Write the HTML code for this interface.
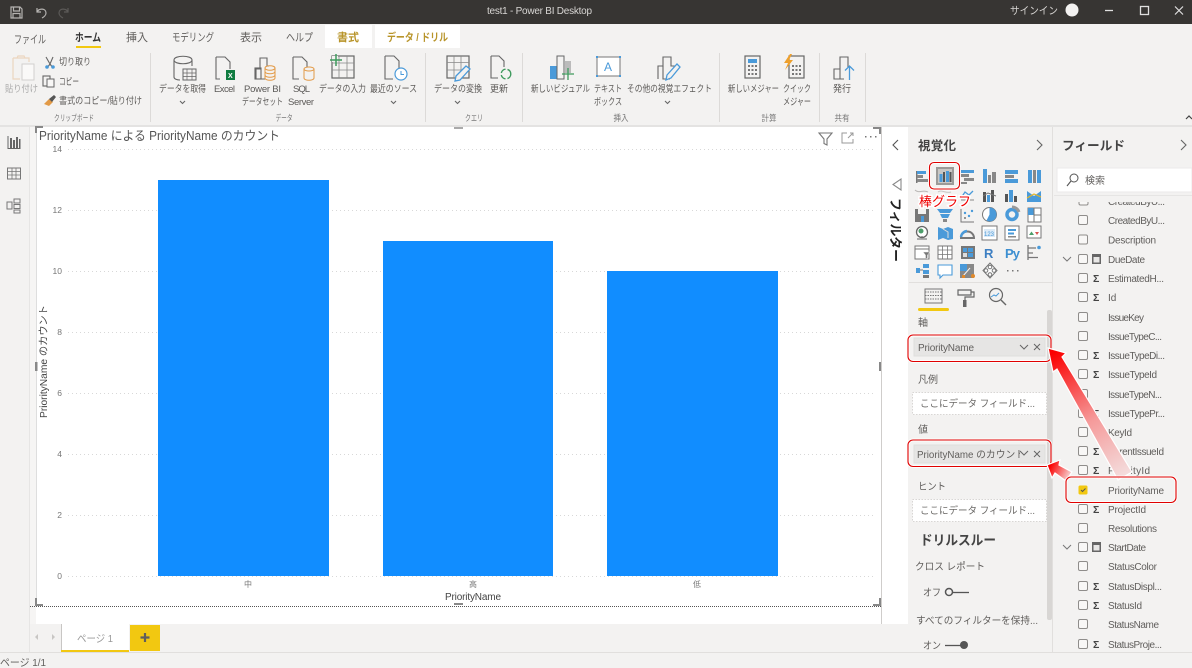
<!DOCTYPE html>
<html lang="ja"><head><meta charset="utf-8"><title>test1 - Power BI Desktop</title>
<style>
html,body{margin:0;padding:0;background:#f3f2f1;}
body{width:1192px;height:668px;overflow:hidden;position:relative;font-family:"Liberation Sans","Noto Sans CJK JP",sans-serif;}
svg{position:absolute;left:0;top:0;filter:blur(.35px);}
text{font-family:"Liberation Sans","Noto Sans CJK JP",sans-serif;fill:#605e5c;font-size:9px;}
.r{font-size:9.5px;fill:#5c5a58;}
.m{text-anchor:middle;}
.t{font-size:11px;fill:#605e5c;}
.g{font-size:8.5px;fill:#777;text-anchor:middle;}
.f{font-size:10px;fill:#605e5c;}
.tick{font-size:8.5px;fill:#777;text-anchor:end;}
.ic{fill:none;stroke:#666;stroke-width:1.1;}
.ib{fill:#4a9ad9;stroke:none;}
.ig{fill:#777;stroke:none;}
.sig{font-size:10.5px;font-weight:bold;fill:#444;}
.cb{fill:#f8f7f6;stroke:#8f8d8b;stroke-width:1;}
</style></head><body>
<svg width="1192" height="668" viewBox="0 0 1192 668" xmlns="http://www.w3.org/2000/svg">
<defs>
<linearGradient id="a1" gradientUnits="userSpaceOnUse" x1="1124" y1="475" x2="1055" y2="352"><stop offset="0" stop-color="#f4dcdc"/><stop offset=".45" stop-color="#f59a9a"/><stop offset="1" stop-color="#fb0000"/></linearGradient>
<linearGradient id="a2" gradientUnits="userSpaceOnUse" x1="1070" y1="476" x2="1050" y2="466"><stop offset="0" stop-color="#f6d2d2"/><stop offset="1" stop-color="#fb0000"/></linearGradient>
<clipPath id="fl"><rect x="1054" y="196" width="138" height="456"/></clipPath>
<clipPath id="v2"><rect x="910" y="445" width="110" height="18"/></clipPath>
</defs>

<!-- title bar -->
<rect x="0" y="0" width="1192" height="24" fill="#373533"/>
<g fill="none" stroke="#b5b3b1" stroke-width="1.2">
<path d="M11 7h9l2 2v9H11zM13.500 7v4h6V7M13 18v-4.500h7V18"/>
<path d="M37 8v4h4M37 12c2-4 9-4 9 1 0 2-2 4-4 5"/>
<path d="M68 8v4h-4M68 12c-2-4-9-4-9 1 0 2 2 4 4 5" stroke="#5c5a58"/>
</g>
<text x="487" y="14" style="font-size:10px;fill:#d8d6d4" textLength="105">test1 - Power BI Desktop</text>
<text x="1010" y="14" style="font-size:10.500px;fill:#d8d6d4" textLength="48" lengthAdjust="spacingAndGlyphs">サインイン</text>
<circle cx="1072" cy="10" r="6.500" fill="#f3f2f1"/>
<path d="M1105 10.500h8" stroke="#e0e0e0" stroke-width="1.300"/>
<rect x="1140.500" y="6.500" width="8" height="8" fill="none" stroke="#e0e0e0" stroke-width="1.300"/>
<path d="M1175 6.500l8 8M1183 6.500l-8 8" stroke="#e0e0e0" stroke-width="1.200"/>

<!-- ribbon -->
<rect x="0" y="24" width="1192" height="101" fill="#f3f2f1"/>
<rect x="0" y="125" width="1192" height="2" fill="#e4e3e2"/>
<rect x="325" y="25" width="47" height="23" fill="#fff"/>
<rect x="375" y="25" width="85" height="23" fill="#fff"/>
<text class="t" x="14" y="43" textLength="32" lengthAdjust="spacingAndGlyphs">ファイル</text>
<text class="t" x="75" y="41" textLength="26" lengthAdjust="spacingAndGlyphs" style="font-weight:bold;fill:#333">ホーム</text>
<rect x="76" y="46" width="25" height="2" fill="#f2c811"/>
<text class="t" x="126" y="41" textLength="22" lengthAdjust="spacingAndGlyphs">挿入</text>
<text class="t" x="172" y="41" textLength="42" lengthAdjust="spacingAndGlyphs">モデリング</text>
<text class="t" x="240" y="41" textLength="22" lengthAdjust="spacingAndGlyphs">表示</text>
<text class="t" x="286" y="41" textLength="27" lengthAdjust="spacingAndGlyphs">ヘルプ</text>
<text class="t" x="337" y="41" textLength="22" lengthAdjust="spacingAndGlyphs" style="font-weight:bold;fill:#b8942a">書式</text>
<text class="t" x="387" y="41" textLength="61" lengthAdjust="spacingAndGlyphs" style="font-weight:bold;fill:#b8942a">データ / ドリル</text>
<g stroke="#dcdad8"><path d="M150.500 53v69M425.500 53v69M522.500 53v69M719.500 53v69M819.500 53v69M865.500 53v69"/></g>

<!-- clipboard -->
<g fill="none" stroke="#ecd6bf" stroke-width="1.200"><path d="M13 58h16v4M13 58v21h7M17 58l1-2h6l1 2"/></g>
<rect x="22" y="64" width="12" height="16" fill="#faf9f8" stroke="#d2d0ce"/>
<text class="r" x="5" y="92" textLength="33" lengthAdjust="spacingAndGlyphs" style="fill:#aaa">貼り付け</text>
<path d="M46 57l4 7 3-7M50 64l-3 4M50 64l3 4" class="ic" stroke="#555"/>
<circle cx="47" cy="67" r="1.800" class="ib"/><circle cx="53" cy="67" r="1.800" class="ib"/>
<text class="r" x="59" y="65" textLength="32" lengthAdjust="spacingAndGlyphs">切り取り</text>
<rect x="43" y="76" width="7" height="10" class="ic"/><rect x="47" y="79" width="7" height="8" fill="#f8f7f6" stroke="#666"/>
<text class="r" x="59" y="85" textLength="20" lengthAdjust="spacingAndGlyphs">コピー</text>
<path d="M44 104l5-5 4 3-4 4z" fill="#e29a47"/><path d="M49 99l5-4 2 2-4 5z" fill="#555"/>
<text class="r" x="59" y="104" textLength="83" lengthAdjust="spacingAndGlyphs">書式のコピー/貼り付け</text>
<text class="g" x="74" y="121" textLength="40" lengthAdjust="spacingAndGlyphs">クリップボード</text>

<!-- data -->
<path d="M174 60c0-5 18-5 18 0v6M174 60c0 5 18 5 18 0M174 60v17c0 2 3 3 6 3" class="ic"/>
<rect x="183" y="69" width="13" height="11" fill="#f3f2f1" stroke="#666"/><path d="M183 73h13M183 76.500h13M187 69v11M192 69v11" stroke="#666" stroke-width=".7"/>
<path d="M216 57h9l5 5v7M216 57v22h4" class="ic"/>
<rect x="226" y="70" width="9" height="10" fill="#107c41"/><text x="228" y="78" style="font-size:7px;font-weight:bold;fill:#fff">X</text>
<path d="M256 79v-10h4v-11h7v8h2M256 79h9" class="ic"/><rect x="255" y="68" width="6" height="11" class="ic"/>
<ellipse cx="270" cy="68" rx="5" ry="2.300" fill="none" stroke="#e29a47"/><path d="M265 68v10c0 3 10 3 10 0V68M265 71.500c0 3 10 3 10 0M265 75c0 3 10 3 10 0" fill="none" stroke="#e29a47"/>
<path d="M293 57h9l5 5v5M293 57v22h6" class="ic"/>
<ellipse cx="309" cy="69" rx="5" ry="2" fill="none" stroke="#e29a47"/><path d="M304 69v9c0 3 10 3 10 0v-9" fill="none" stroke="#e29a47"/>
<rect x="332" y="56" width="22" height="22" fill="none" stroke="#666" stroke-width="1.200"/><path d="M332 63h22M332 70h22M339 56v22M347 56v22" stroke="#888" stroke-width=".8"/>
<rect x="332" y="56" width="6" height="6" fill="#f3f2f1"/><path d="M336 54v12M330 60h12" stroke="#3e9a5d" stroke-width="1.500"/>
<path d="M385 56h9l5 5v8M385 56v23h8" class="ic"/><circle cx="401" cy="74" r="6" fill="#fff" stroke="#4a9ad9" stroke-width="1.200"/><path d="M401 71v3.500h3" stroke="#4a9ad9" fill="none"/>
<text class="r" x="159" y="92" textLength="47" lengthAdjust="spacingAndGlyphs">データを取得</text>
<path d="M180 101l2.500 2.500 2.500-2.500" class="ic" stroke="#555"/>
<text class="r" x="214" y="92" textLength="21">Excel</text>
<text class="r" x="244" y="92" textLength="37">Power BI</text>
<text class="r" x="242" y="105" textLength="41" lengthAdjust="spacingAndGlyphs">データセット</text>
<text class="r" x="293" y="92" textLength="17">SQL</text>
<text class="r" x="288" y="105" textLength="26">Server</text>
<text class="r" x="319" y="92" textLength="47" lengthAdjust="spacingAndGlyphs">データの入力</text>
<text class="r" x="370" y="92" textLength="47" lengthAdjust="spacingAndGlyphs">最近のソース</text>
<path d="M391 101l2.500 2.500 2.500-2.500" class="ic" stroke="#555"/>
<text class="g" x="284" y="121" textLength="17" lengthAdjust="spacingAndGlyphs">データ</text>

<!-- query -->
<rect x="447" y="56" width="22" height="22" fill="none" stroke="#666" stroke-width="1.200"/><path d="M447 62.500h22M447 70h22M454 56v22M461 56v22" stroke="#888" stroke-width=".8"/>
<path d="M466 66l4 3-10 11-5 1 1-5z" fill="#f3f2f1" stroke="#4a9ad9" stroke-width="1.300"/>
<path d="M491 56h8l5 5v6M491 56v22h7" class="ic"/>
<circle cx="506" cy="74" r="4.800" fill="none" stroke="#3e9a5d" stroke-width="1.400" stroke-dasharray="6 2"/>
<text class="r" x="434" y="92" textLength="48" lengthAdjust="spacingAndGlyphs">データの変換</text>
<path d="M455 101l2.500 2.500 2.500-2.500" class="ic" stroke="#555"/>
<text class="r" x="490" y="92" textLength="18" lengthAdjust="spacingAndGlyphs">更新</text>
<text class="g" x="474" y="121" textLength="18" lengthAdjust="spacingAndGlyphs">クエリ</text>

<!-- insert -->
<rect x="550" y="66" width="7" height="13" class="ib"/><rect x="557" y="56" width="7" height="23" fill="#f3f2f1" stroke="#666"/><rect x="565" y="61" width="6" height="12" fill="#bbb"/>
<path d="M568 68v12M562 74h12" stroke="#3e9a5d" stroke-width="1.300"/>
<rect x="597" y="57" width="23" height="19" fill="#fff" stroke="#777"/>
<rect x="596" y="56" width="2" height="2" class="ib"/><rect x="619" y="56" width="2" height="2" class="ib"/><rect x="596" y="75" width="2" height="2" class="ib"/><rect x="619" y="75" width="2" height="2" class="ib"/>
<text x="604" y="71" style="font-size:12px;fill:#4a9ad9">A</text>
<path d="M658 79V66h5v-9h8v9h4" class="ic"/><path d="M663 66v13h7" class="ic"/><path d="M677 64l3 3-9 11-5 2 1-5z" fill="#f3f2f1" stroke="#4a9ad9" stroke-width="1.300"/>
<text class="r" x="531" y="92" textLength="59" lengthAdjust="spacingAndGlyphs">新しいビジュアル</text>
<text class="r" x="594" y="92" textLength="28" lengthAdjust="spacingAndGlyphs">テキスト</text>
<text class="r" x="594" y="105" textLength="28" lengthAdjust="spacingAndGlyphs">ボックス</text>
<text class="r" x="627" y="92" textLength="85" lengthAdjust="spacingAndGlyphs">その他の視覚エフェクト</text>
<path d="M665 101l2.500 2.500 2.500-2.500" class="ic" stroke="#555"/>
<text class="g" x="621" y="121" textLength="15" lengthAdjust="spacingAndGlyphs">挿入</text>

<!-- calc -->
<rect x="745" y="56" width="15" height="22" fill="none" stroke="#666" stroke-width="1.200"/><rect x="748" y="59" width="9" height="4" class="ib"/>
<g class="ig"><rect x="748" y="65" width="2" height="2"/><rect x="751.500" y="65" width="2" height="2"/><rect x="755" y="65" width="2" height="2"/><rect x="748" y="69" width="2" height="2"/><rect x="751.500" y="69" width="2" height="2"/><rect x="755" y="69" width="2" height="2"/><rect x="748" y="73" width="2" height="2"/><rect x="751.500" y="73" width="2" height="2"/><rect x="755" y="73" width="2" height="2"/></g>
<rect x="789" y="56" width="15" height="22" fill="none" stroke="#666" stroke-width="1.200"/>
<g class="ig"><rect x="792" y="65" width="2" height="2"/><rect x="795.500" y="65" width="2" height="2"/><rect x="799" y="65" width="2" height="2"/><rect x="792" y="69" width="2" height="2"/><rect x="795.500" y="69" width="2" height="2"/><rect x="799" y="69" width="2" height="2"/><rect x="792" y="73" width="2" height="2"/><rect x="795.500" y="73" width="2" height="2"/><rect x="799" y="73" width="2" height="2"/></g>
<path d="M790 54l-6 9h4l-3 7 8-10h-4l3-6z" fill="#eea02c"/>
<text class="r" x="728" y="92" textLength="51" lengthAdjust="spacingAndGlyphs">新しいメジャー</text>
<text class="r" x="783" y="92" textLength="28" lengthAdjust="spacingAndGlyphs">クイック</text>
<text class="r" x="783" y="105" textLength="28" lengthAdjust="spacingAndGlyphs">メジャー</text>
<text class="g" x="769" y="121" textLength="15" lengthAdjust="spacingAndGlyphs">計算</text>

<!-- publish -->
<path d="M834 79v-10h6v10zM840 69v-12h8v10M834 79h10" class="ic"/>
<path d="M849.500 80V66M845 70.500l4.500-4.500 4.500 4.500" fill="none" stroke="#4a9ad9" stroke-width="1.300"/>
<text class="r" x="833" y="92" textLength="18" lengthAdjust="spacingAndGlyphs">発行</text>
<text class="g" x="842" y="121" textLength="15" lengthAdjust="spacingAndGlyphs">共有</text>
<path d="M1186 119l3-3 3 3" fill="none" stroke="#444" stroke-width="1.200"/>

<!-- left nav -->
<rect x="0" y="127" width="30" height="525" fill="#f3f2f1"/>
<path d="M29.500 127v525" stroke="#e6e5e4"/>
<path d="M8 136v12.500h12.500" fill="none" stroke="#666"/><rect x="10" y="138" width="2" height="10" fill="#666"/><rect x="13" y="140" width="2" height="8" fill="#666"/><rect x="16" y="137" width="2" height="11" fill="#666"/><rect x="19" y="139" width="1.500" height="9" fill="#666"/>
<rect x="7.500" y="168" width="13" height="11" fill="none" stroke="#777"/><path d="M7.500 171.500h13M7.500 175h13M12 168v11M16 168v11" stroke="#777" stroke-width=".8"/>
<g fill="none" stroke="#777"><rect x="7" y="202" width="5" height="7"/><rect x="14" y="199" width="6" height="4"/><rect x="14" y="204.500" width="6" height="4"/><rect x="14" y="210" width="6" height="3"/></g>

<!-- canvas -->
<rect x="30" y="127" width="852" height="497" fill="#fff"/>
<rect x="30" y="127" width="6" height="497" fill="#f6f5f4"/>
<path d="M36.500 127v479" stroke="#dedede"/>
<g stroke="#d8d8d8" stroke-dasharray="1 3"><path d="M68 149.500h808M68 210.500h808M68 271.500h808M68 332.500h808M68 393.500h808M68 454.500h808M68 515.500h808M68 576.500h808"/></g>
<rect x="158" y="180" width="171" height="396" fill="#118dff"/>
<rect x="383" y="241" width="170" height="335" fill="#118dff"/>
<rect x="607" y="271" width="171" height="305" fill="#118dff"/>
<text x="39" y="140" style="font-size:12.500px;fill:#555" textLength="241" lengthAdjust="spacingAndGlyphs">PriorityName による PriorityName のカウント</text>
<text class="tick" x="62" y="152">14</text><text class="tick" x="62" y="213">12</text><text class="tick" x="62" y="274">10</text><text class="tick" x="62" y="335">8</text><text class="tick" x="62" y="396">6</text><text class="tick" x="62" y="457">4</text><text class="tick" x="62" y="518">2</text><text class="tick" x="62" y="579">0</text>
<text transform="translate(47,418) rotate(-90)" style="font-size:10px;fill:#444" textLength="113" lengthAdjust="spacingAndGlyphs">PriorityName のカウント</text>
<text x="445" y="600" style="font-size:10px;fill:#444" textLength="56">PriorityName</text>
<text class="g" x="248" y="587" style="font-size:8px">中</text>
<text class="g" x="473" y="587" style="font-size:8px">高</text>
<text class="g" x="697" y="587" style="font-size:8px">低</text>
<path d="M819 133h13l-5 6v6l-3-1.500V139z" fill="none" stroke="#777" stroke-width="1.100"/>
<path d="M847 133h-5v10h11v-4M848 138l5-5M850 133h3v3" fill="none" stroke="#999"/>
<g fill="#777"><rect x="865" y="136" width="1.500" height="1.500"/><rect x="870" y="136" width="1.500" height="1.500"/><rect x="875" y="136" width="1.500" height="1.500"/></g>
<!-- frame handles -->
<path d="M36 133v-6h7" fill="none" stroke="#888" stroke-width="2"/>
<path d="M873 128h7v6" fill="none" stroke="#888" stroke-width="2"/>
<path d="M36 598v7h7" fill="none" stroke="#888" stroke-width="2"/>
<path d="M873 605h7v-7" fill="none" stroke="#888" stroke-width="2"/>
<rect x="35" y="362" width="2.500" height="9" fill="#888"/><rect x="879" y="362" width="2.500" height="9" fill="#888"/>
<rect x="454" y="127" width="9" height="2" fill="#aaa"/><rect x="454" y="603" width="9" height="2" fill="#888"/>
<path d="M30 606.500h851" stroke="#555" stroke-dasharray="1 1"/>
<path d="M881.500 127v497" stroke="#cfcdcb"/>

<!-- filter pane -->
<rect x="882" y="127" width="26" height="497" fill="#fff"/>
<path d="M898 140l-5 5 5 5" fill="none" stroke="#555" stroke-width="1.100"/>
<path d="M901 179v11l-8-5.500z" fill="none" stroke="#888" stroke-width="1.100"/>
<text transform="translate(891,198) rotate(90)" style="font-size:13px;font-weight:bold;fill:#222" textLength="64" lengthAdjust="spacingAndGlyphs">フィルター</text>

<!-- viz pane -->
<rect x="908" y="127" width="145" height="525" fill="#f3f2f1"/>
<path d="M1052.500 127v525" stroke="#e1dfdd"/>
<text x="918" y="150" style="font-size:12.500px;font-weight:bold;fill:#444" textLength="38">視覚化</text>
<path d="M1037 140l5 5-5 5" fill="none" stroke="#666" stroke-width="1.100"/>
<path d="M909 282.500h143" stroke="#e1dfdd"/>

<!-- viz icon grid -->
<rect x="916" y="171" width="1.500" height="12" fill="#777"/>
<rect x="917" y="171" width="9" height="3" class="ib"/><rect x="917" y="175" width="6" height="3" fill="#888"/><rect x="917" y="179" width="12" height="3" fill="#888"/>
<rect x="936" y="167" width="18" height="18" fill="#9c9a98"/><rect x="938" y="169" width="14" height="14" fill="#c9c7c5"/><rect x="939.500" y="174" width="3" height="8" class="ib"/><rect x="943" y="172" width="2" height="10" fill="#555"/><rect x="946" y="171" width="3" height="11" class="ib"/><rect x="949.500" y="172" width="2" height="10" fill="#555"/>
<rect x="961" y="170" width="13" height="3" class="ib"/><rect x="961" y="174" width="8" height="3" fill="#888"/><rect x="964" y="178" width="10" height="3" fill="#888"/><rect x="961" y="182" width="6" height="2" fill="#888"/>
<rect x="983" y="169" width="4" height="14" class="ib"/><rect x="988" y="175" width="3" height="8" fill="#888"/><rect x="992" y="172" width="4" height="11" fill="#888"/>
<rect x="1005" y="170" width="13" height="4" class="ib"/><rect x="1005" y="175" width="9" height="3" fill="#888"/><rect x="1005" y="179" width="13" height="4" class="ib"/>
<rect x="1028" y="170" width="4" height="13" class="ib"/><rect x="1033" y="170" width="3" height="13" fill="#888"/><rect x="1037" y="170" width="4" height="13" class="ib"/>
<!-- row 2 -->
<path d="M915 190c4 4 8-1 13 2" fill="none" stroke="#b9b7b5"/><path d="M938 192c4-3 8 2 13 0" fill="none" stroke="#c9c7c5"/>
<path d="M961 198l4-6 4 3 4-4" fill="none" stroke="#4a9ad9" stroke-width="1.300"/><path d="M961 200h13" stroke="#888"/>
<rect x="983" y="192" width="3" height="10" fill="#555"/><rect x="987" y="195" width="3" height="7" class="ib"/><rect x="991" y="190" width="3" height="12" fill="#555"/><path d="M983 196l5-3 8 3" fill="none" stroke="#777"/>
<rect x="1005" y="194" width="3" height="8" fill="#555"/><rect x="1009" y="190" width="4" height="12" class="ib"/><rect x="1014" y="196" width="3" height="6" fill="#555"/>
<path d="M1027 191l7 5 7-5v11h-14z" class="ib"/><path d="M1027 198l7-4 7 3" fill="none" stroke="#e6b422" stroke-width="1.200"/>
<!-- row 3 -->
<rect x="915" y="209" width="14" height="13" fill="#777"/><rect x="918" y="209" width="8" height="5" fill="#f3f2f1"/><rect x="921" y="216" width="3" height="6" class="ib"/>
<path d="M937 209h16l-3 4h-10z" class="ib"/><path d="M940 214h10l-2 4h-6z" class="ib"/><rect x="943" y="219" width="4" height="3" fill="#888"/>
<path d="M961 209v13h13" fill="none" stroke="#777"/><g class="ib"><circle cx="965" cy="213" r="1.200"/><circle cx="969" cy="216" r="1.200"/><circle cx="972" cy="211" r="1.200"/></g><circle cx="965" cy="218" r="1" fill="#777"/>
<circle cx="989.500" cy="214.500" r="7" fill="#fff" stroke="#777"/><path d="M989.500 214.500V207.500a7 7 0 0 1 0 14 7 7 0 0 1-3-1z" class="ib"/>
<circle cx="1012" cy="214.500" r="5" fill="none" stroke="#4a9ad9" stroke-width="3.500"/><path d="M1012 207a7.500 7.500 0 0 1 7 5" fill="none" stroke="#999" stroke-width="3"/>
<rect x="1028" y="208" width="13" height="14" fill="#fff" stroke="#777"/><rect x="1028" y="208" width="6" height="7" class="ib"/><path d="M1034 208v14M1034 215h7" stroke="#777"/>
<!-- row 4 -->
<circle cx="922" cy="232" r="5.500" fill="#fff" stroke="#666" stroke-width="1.300"/><circle cx="921" cy="231" r="2.500" fill="#4c9e6a"/><path d="M917 239h10M922 238v-2" stroke="#666"/>
<path d="M938 227l5 2 5-2 5 2v10l-5 1-5-2-5 2z" class="ib"/><path d="M943 229l5 3v6" stroke="#ddd" fill="none"/>
<path d="M961 238a6.500 6.500 0 0 1 13 0z" fill="none" stroke="#777" stroke-width="2"/><path d="M961 237a6.500 6.500 0 0 1 6-6" fill="none" stroke="#4a9ad9" stroke-width="2.400"/>
<rect x="982" y="226" width="15" height="14" fill="#fff" stroke="#777"/><rect x="984" y="229" width="11" height="8" fill="#dceaf6"/><text x="984" y="236" style="font-size:6px;fill:#4a9ad9">123</text>
<rect x="1005" y="226" width="14" height="14" fill="#fff" stroke="#777"/><rect x="1008" y="229" width="8" height="2" class="ib"/><rect x="1008" y="232.500" width="6" height="2" class="ib"/><rect x="1008" y="236" width="8" height="1.500" fill="#888"/>
<rect x="1027" y="226" width="14" height="12" fill="#fff" stroke="#777"/><path d="M1029 235l2.500-3.500 2.500 3.500z" fill="#4c9e6a"/><path d="M1035 232h4l-2 3z" fill="#d9534f"/>
<!-- row 5 -->
<rect x="915" y="246" width="14" height="13" fill="#fff" stroke="#777"/><path d="M915 249h14" stroke="#777"/><path d="M923 252h7l-2.500 3v4l-2-1v-3z" fill="#777" stroke="#f3f2f1" stroke-width=".5"/>
<rect x="938" y="246" width="14" height="13" fill="#fff" stroke="#777"/><path d="M938 250h14M938 254.500h14M942.500 246v13M947.500 246v13" stroke="#777" stroke-width=".8"/>
<rect x="961" y="246" width="14" height="13" fill="#777"/><rect x="963" y="248" width="4" height="4" class="ib"/><rect x="968" y="248" width="5" height="4" class="ib"/><rect x="968" y="253" width="5" height="4" class="ib"/><rect x="963" y="253" width="4" height="4" fill="#ddd"/>
<text x="984" y="258" style="font-size:13px;font-weight:bold;fill:#3d7fc2">R</text>
<text x="1005" y="258" style="font-size:13px;font-weight:bold;fill:#3d8fd1" textLength="15">Py</text>
<path d="M1028 245v15M1028 248h8M1028 253h5M1028 257.500h10" fill="none" stroke="#777" stroke-width="1.300"/><circle cx="1039" cy="247.500" r="1.800" class="ib"/>
<!-- row 6 -->
<rect x="916" y="268" width="4" height="5" class="ib"/><rect x="923" y="264" width="6" height="4" class="ib"/><rect x="923" y="270" width="6" height="4" class="ib"/><rect x="923" y="275" width="6" height="3" fill="#777"/><path d="M920 270h3" stroke="#777"/>
<path d="M938 265h14v10h-9l-3 3v-3h-2z" fill="#fff" stroke="#4a9ad9" stroke-width="1.100"/>
<rect x="960" y="264" width="14" height="14" fill="#888"/><rect x="960" y="264" width="7" height="7" class="ib"/><path d="M963 276l7-8" stroke="#f3f2f1"/><circle cx="973" cy="276" r="2" fill="#e0892b"/><rect x="962" y="275" width="3" height="3" fill="#e0892b"/>
<path d="M990 263l7 7.500-7 7.500-7-7.500z" fill="#fff" stroke="#777"/><circle cx="990" cy="267" r="1.800" fill="none" stroke="#777"/><circle cx="986" cy="270.500" r="1.800" fill="none" stroke="#777"/><circle cx="994" cy="270.500" r="1.800" fill="none" stroke="#777"/><circle cx="990" cy="274.500" r="1.800" fill="none" stroke="#777"/>
<g fill="#777"><rect x="1007" y="270" width="1.500" height="1.500"/><rect x="1012" y="270" width="1.500" height="1.500"/><rect x="1017" y="270" width="1.500" height="1.500"/></g>

<!-- highlight -->
<rect x="929.500" y="162.500" width="30" height="26.500" rx="4.500" fill="none" stroke="#fff" stroke-width="3"/>
<rect x="929.500" y="162.500" width="30" height="26.500" rx="4.500" fill="none" stroke="#e00000" stroke-width="1.100"/>
<text x="919" y="206" style="font-size:13px;fill:#f00000;stroke:#fff;stroke-width:3px;paint-order:stroke" textLength="52">棒グラフ</text>

<!-- viz sub tabs -->
<g fill="none" stroke="#777"><rect x="925" y="289" width="17" height="14"/><path d="M925 292h17M925 295.500h17M925 299h17" stroke-dasharray="1.500 1"/></g>
<rect x="918" y="308" width="31" height="3" rx="1.500" fill="#f2c811"/>
<path d="M958 290h13v5h-13zM971 292h3v5h-9v4" fill="none" stroke="#666" stroke-width="1.200"/><rect x="963" y="300" width="3.500" height="7" fill="#666"/>
<circle cx="996" cy="295" r="6.500" fill="none" stroke="#666" stroke-width="1.200"/><path d="M991 297l3-2 2 1 3-3" fill="none" stroke="#4a9ad9"/><path d="M1001 300l5 5" stroke="#666" stroke-width="1.400"/>

<rect x="1047" y="310" width="5" height="310" rx="2" fill="#d8d6d4"/>

<!-- wells -->
<text class="f" x="918" y="326">軸</text>
<rect x="914" y="338" width="131" height="18" fill="#e6e5e4" stroke="#dfdedd"/>
<text class="f" x="918" y="351" textLength="56">PriorityName</text>
<path d="M1020 345l4 4 4-4M1034 344l6 6M1040 344l-6 6" fill="none" stroke="#666"/>
<text class="f" x="918" y="383" textLength="20">凡例</text>
<rect x="912.500" y="392.500" width="134" height="22" fill="#fff" stroke="#d8d6d4" stroke-dasharray="1.500 1.500"/>
<text class="f" x="920" y="407" textLength="115" lengthAdjust="spacingAndGlyphs" style="fill:#6a6866">ここにデータ フィールド...</text>
<text class="f" x="918" y="433">値</text>
<rect x="914" y="445" width="131" height="18" fill="#e6e5e4" stroke="#dfdedd"/>
<g clip-path="url(#v2)"><text class="f" x="917" y="458" textLength="108" lengthAdjust="spacingAndGlyphs">PriorityName のカウント</text></g>
<path d="M1020 451l4 4 4-4M1034 451l6 6M1040 451l-6 6" fill="none" stroke="#666"/>
<text class="f" x="918" y="490" textLength="28" lengthAdjust="spacingAndGlyphs">ヒント</text>
<rect x="912.500" y="499.500" width="134" height="22" fill="#fff" stroke="#d8d6d4" stroke-dasharray="1.500 1.500"/>
<text class="f" x="920" y="514" textLength="115" lengthAdjust="spacingAndGlyphs" style="fill:#6a6866">ここにデータ フィールド...</text>
<text x="920" y="545" style="font-size:13.500px;font-weight:bold;fill:#444" textLength="76" lengthAdjust="spacingAndGlyphs">ドリルスルー</text>
<text class="f" x="915" y="570" textLength="70" lengthAdjust="spacingAndGlyphs">クロス レポート</text>
<text class="f" x="923" y="596" textLength="18" lengthAdjust="spacingAndGlyphs">オフ</text>
<circle cx="949" cy="592" r="3.500" fill="none" stroke="#555" stroke-width="1.500"/><path d="M953 592.500h16" stroke="#555" stroke-width="1.300"/>
<text class="f" x="916" y="624" textLength="122" lengthAdjust="spacingAndGlyphs">すべてのフィルターを保持...</text>
<text class="f" x="923" y="649" textLength="18" lengthAdjust="spacingAndGlyphs">オン</text>
<path d="M945 645.500h16" stroke="#555" stroke-width="1.300"/><circle cx="964" cy="645" r="4" fill="#555"/>

<!-- fields pane -->
<rect x="1053" y="127" width="139" height="525" fill="#f3f2f1"/>
<text x="1062" y="150" style="font-size:12.500px;font-weight:bold;fill:#444" textLength="63" lengthAdjust="spacingAndGlyphs">フィールド</text>
<path d="M1181 140l5 5-5 5" fill="none" stroke="#666" stroke-width="1.100"/>
<rect x="1057" y="168" width="135" height="24" fill="#fff" stroke="#ebeaea"/>
<circle cx="1074" cy="178" r="4" fill="none" stroke="#555"/><path d="M1071 181l-4 5" stroke="#555" stroke-width="1.100"/>
<text class="f" x="1085" y="184" textLength="20">検索</text>
<path d="M1054 195.500h138" stroke="#e6e5e4"/>
<g clip-path="url(#fl)">
<rect class="cb" x="1079" y="196" width="9" height="9" rx="1.500"/><text class="f" x="1108" y="205" textLength="57">CreatedByU...</text>
</g>
<rect x="1054" y="196" width="138" height="6" fill="#f3f2f1"/>
<rect class="cb" x="1078.500" y="215.500" width="9" height="9" rx="1.500"/><text class="f" x="1108" y="224" textLength="57">CreatedByU...</text>
<rect class="cb" x="1078.500" y="235" width="9" height="9" rx="1.500"/><text class="f" x="1108" y="243.500" textLength="48">Description</text>
<path d="M1063 257l4 4 4-4" fill="none" stroke="#777"/><rect class="cb" x="1078.500" y="254.500" width="9" height="9" rx="1.500"/><rect x="1092" y="254" width="9" height="10" fill="#666"/><rect x="1093.500" y="257" width="6" height="5.500" fill="#e8e7e6"/><text class="f" x="1108" y="263" textLength="37">DueDate</text>
<rect class="cb" x="1078.500" y="273.500" width="9" height="9" rx="1.500"/><text class="sig" x="1093" y="282">Σ</text><text class="f" x="1108" y="282" textLength="56">EstimatedH...</text>
<rect class="cb" x="1078.500" y="292.500" width="9" height="9" rx="1.500"/><text class="sig" x="1093" y="301">Σ</text><text class="f" x="1108" y="301">Id</text>
<rect class="cb" x="1078.500" y="312.500" width="9" height="9" rx="1.500"/><text class="f" x="1108" y="321" textLength="36">IssueKey</text>
<rect class="cb" x="1078.500" y="331.500" width="9" height="9" rx="1.500"/><text class="f" x="1108" y="340" textLength="54">IssueTypeC...</text>
<rect class="cb" x="1078.500" y="350.500" width="9" height="9" rx="1.500"/><text class="sig" x="1093" y="359">Σ</text><text class="f" x="1108" y="359" textLength="57">IssueTypeDi...</text>
<rect class="cb" x="1078.500" y="369.500" width="9" height="9" rx="1.500"/><text class="sig" x="1093" y="378">Σ</text><text class="f" x="1108" y="378" textLength="49">IssueTypeId</text>
<rect class="cb" x="1078.500" y="389.500" width="9" height="9" rx="1.500"/><text class="f" x="1108" y="398" textLength="54">IssueTypeN...</text>
<rect class="cb" x="1078.500" y="408.500" width="9" height="9" rx="1.500"/><text class="sig" x="1093" y="417">Σ</text><text class="f" x="1108" y="417" textLength="57">IssueTypePr...</text>
<rect class="cb" x="1078.500" y="427.500" width="9" height="9" rx="1.500"/><text class="sig" x="1093" y="436">Σ</text><text class="f" x="1108" y="436" textLength="24">KeyId</text>
<rect class="cb" x="1078.500" y="446.500" width="9" height="9" rx="1.500"/><text class="sig" x="1093" y="455">Σ</text><text class="f" x="1108" y="455" textLength="56">ParentIssueId</text>
<rect class="cb" x="1078.500" y="465.500" width="9" height="9" rx="1.500"/><text class="sig" x="1093" y="474">Σ</text><text class="f" x="1108" y="474" textLength="42">PriorityId</text>
<rect x="1078.500" y="485.500" width="9" height="9" rx="1.500" fill="#f2c811"/><path d="M1081 490l1.500 1.500 3-3" fill="none" stroke="#555"/><text class="f" x="1108" y="494" textLength="56">PriorityName</text>
<rect class="cb" x="1078.500" y="504.500" width="9" height="9" rx="1.500"/><text class="sig" x="1093" y="513">Σ</text><text class="f" x="1108" y="513" textLength="38">ProjectId</text>
<rect class="cb" x="1078.500" y="523.500" width="9" height="9" rx="1.500"/><text class="f" x="1108" y="532" textLength="49">Resolutions</text>
<path d="M1063 545l4 4 4-4" fill="none" stroke="#777"/><rect class="cb" x="1078.500" y="542.500" width="9" height="9" rx="1.500"/><rect x="1092" y="542" width="9" height="10" fill="#666"/><rect x="1093.500" y="545" width="6" height="5.500" fill="#e8e7e6"/><text class="f" x="1108" y="551" textLength="38">StartDate</text>
<rect class="cb" x="1078.500" y="561.500" width="9" height="9" rx="1.500"/><text class="f" x="1108" y="570" textLength="49">StatusColor</text>
<rect class="cb" x="1078.500" y="581.500" width="9" height="9" rx="1.500"/><text class="sig" x="1093" y="590">Σ</text><text class="f" x="1108" y="590" textLength="54">StatusDispl...</text>
<rect class="cb" x="1078.500" y="600.500" width="9" height="9" rx="1.500"/><text class="sig" x="1093" y="609">Σ</text><text class="f" x="1108" y="609" textLength="34">StatusId</text>
<rect class="cb" x="1078.500" y="619.500" width="9" height="9" rx="1.500"/><text class="f" x="1108" y="628" textLength="51">StatusName</text>
<rect class="cb" x="1078.500" y="639.500" width="9" height="9" rx="1.500"/><text class="sig" x="1093" y="648">Σ</text><text class="f" x="1108" y="648" textLength="54">StatusProje...</text>

<!-- page tabs / status -->
<rect x="30" y="624" width="878" height="28" fill="#f3f2f1"/>
<path d="M38 634l-3 3 3 3z" fill="#c8c6c4"/><path d="M52 634l3 3-3 3z" fill="#c8c6c4"/>
<rect x="61" y="624" width="68" height="26" fill="#fff"/><path d="M61.500 624v26" stroke="#c8c6c4"/>
<rect x="61" y="650" width="68" height="2" fill="#f2c811"/>
<text x="77" y="642" style="font-size:10.500px;fill:#999" textLength="36" lengthAdjust="spacingAndGlyphs">ページ 1</text>
<rect x="130" y="625" width="30" height="26" fill="#f2c811"/>
<path d="M145 633v9M140.500 637.500h9" stroke="#605e5c" stroke-width="2.200"/>
<rect x="0" y="652" width="1192" height="16" fill="#f3f2f1"/>
<path d="M0 652.500h1192" stroke="#e1dfdd"/>
<text x="0" y="666" style="font-size:10.500px;fill:#605e5c" textLength="46" lengthAdjust="spacingAndGlyphs">ページ 1/1</text>

<!-- red callouts -->
<rect x="908" y="335" width="143" height="26.500" rx="5" fill="none" stroke="#fff" stroke-width="3" opacity=".8"/>
<rect x="908" y="335" width="143" height="26.500" rx="5" fill="none" stroke="#e00000" stroke-width="1.100"/>
<rect x="908" y="440" width="143" height="26.500" rx="5" fill="none" stroke="#fff" stroke-width="3" opacity=".8"/>
<rect x="908" y="440" width="143" height="26.500" rx="5" fill="none" stroke="#e00000" stroke-width="1.100"/>
<path d="M1048 348L1066 353L1062 357L1132 472L1118 480L1057 369L1053 372Z" fill="url(#a1)" stroke="#fff" stroke-width="1.200"/>
<path d="M1047 465L1060 460L1059 465L1072 472L1066 481L1055 473L1052 478Z" fill="url(#a2)" stroke="#fff" stroke-width="1.200"/>
<rect x="1066" y="477" width="110" height="25.500" rx="5" fill="none" stroke="#fff" stroke-width="3" opacity=".8"/>
<rect x="1066" y="477" width="110" height="25.500" rx="5" fill="none" stroke="#e00000" stroke-width="1.100"/>
</svg>
</body></html>
